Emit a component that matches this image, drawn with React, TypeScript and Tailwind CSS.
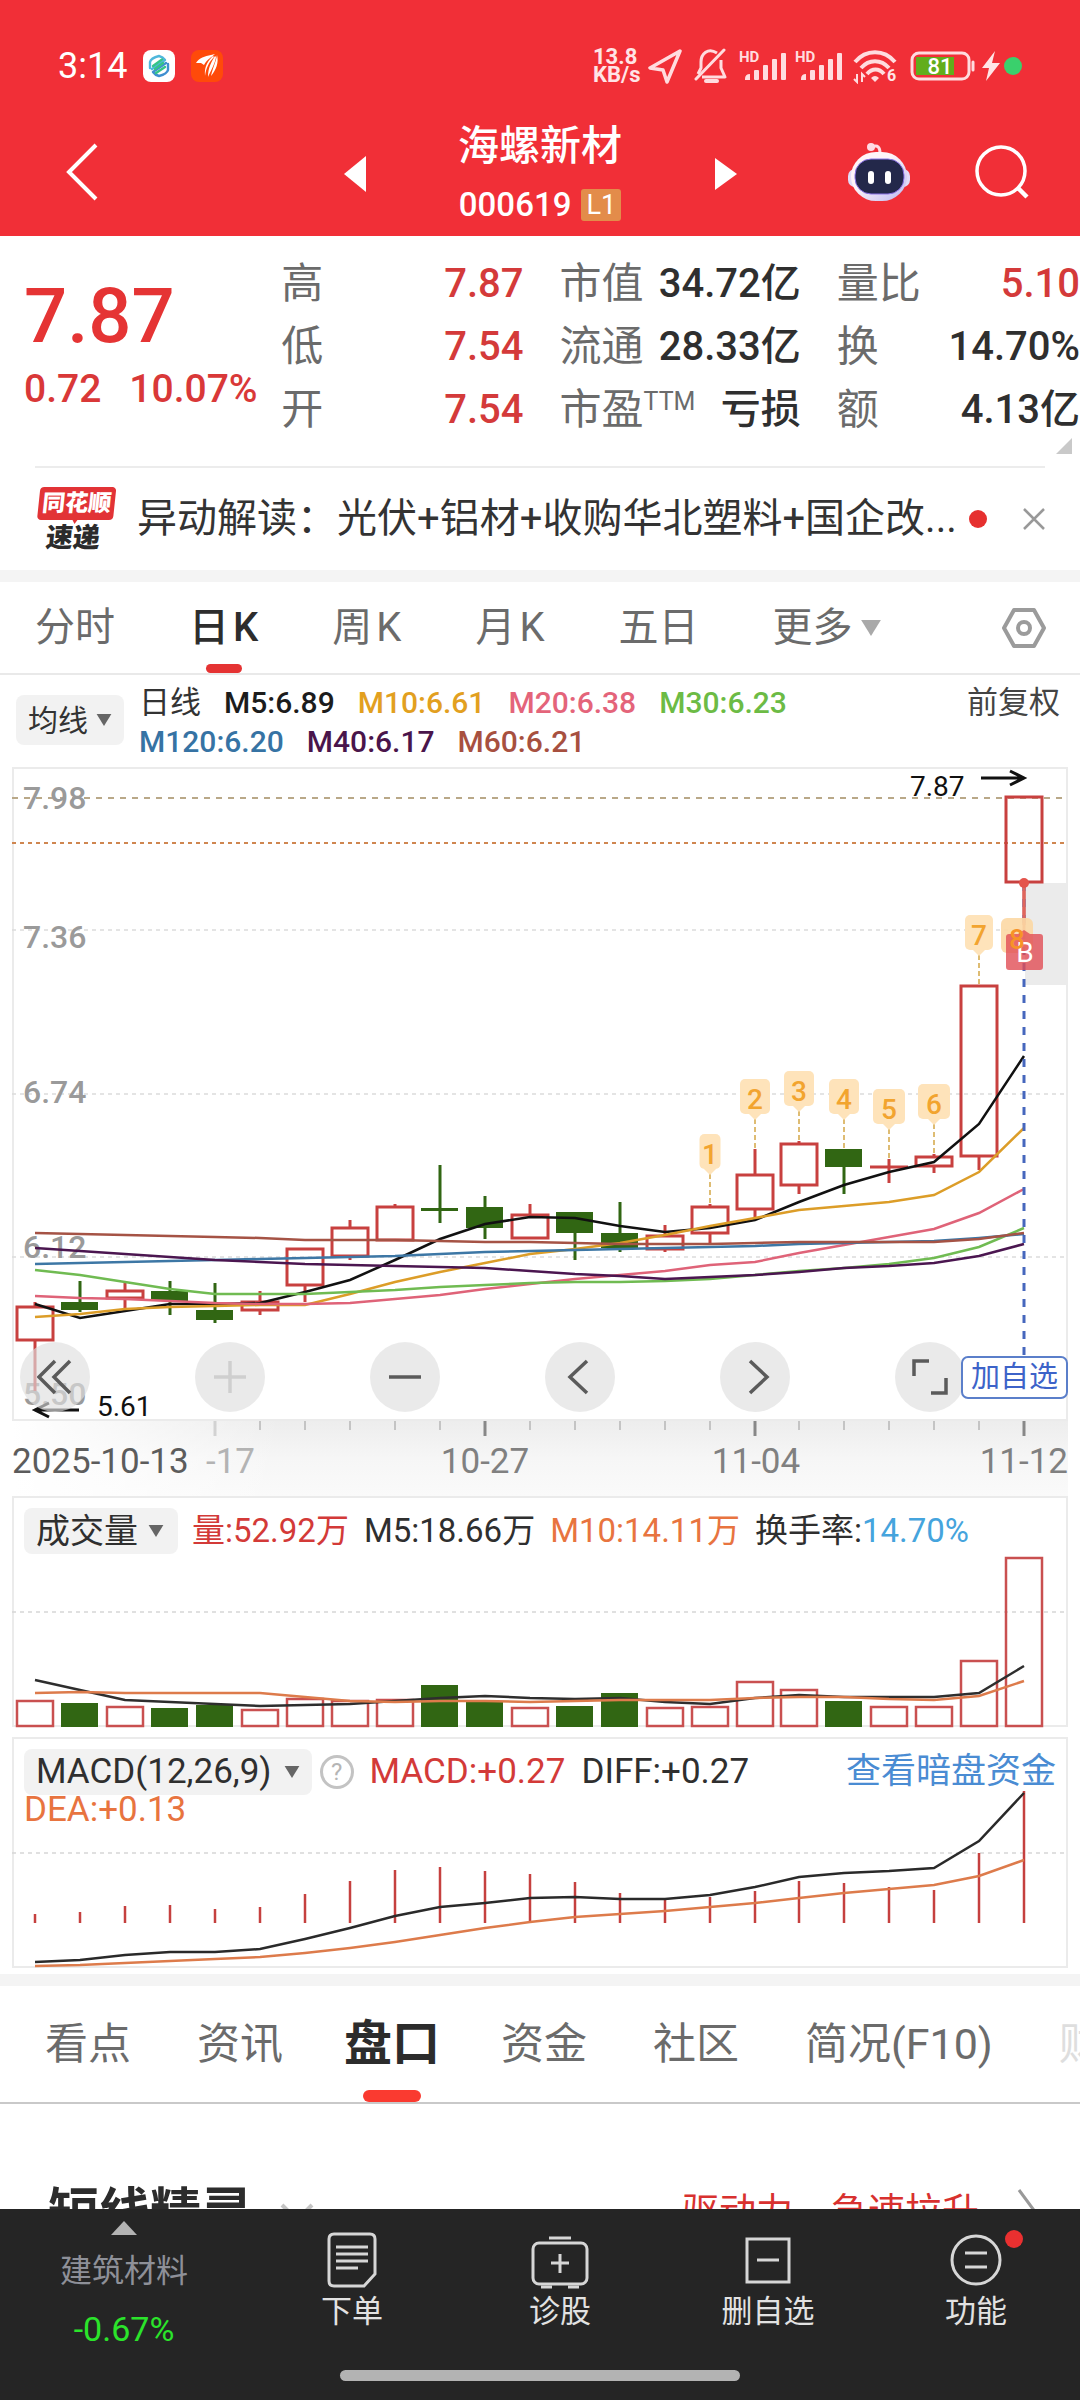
import React from "react";

/* ---------- chart data ---------- */

type Candle = { up: boolean; top: number; bottom: number; high: number; low: number };

const c = (up: boolean, top: number, bottom: number, high: number, low: number): Candle => ({ up, top, bottom, high, low });

const candles: Candle[] = [
  c(true, 1307, 1340, 1302, 1391),
  c(false, 1302, 1310, 1281, 1312),
  c(true, 1291, 1298, 1283, 1309),
  c(false, 1291, 1301, 1281, 1315),
  c(false, 1310, 1320, 1283, 1323),
  c(true, 1302, 1310, 1291, 1315),
  c(true, 1249, 1285, 1249, 1302),
  c(true, 1228, 1256, 1220, 1260),
  c(true, 1207, 1240, 1204, 1240),
  c(false, 1208, 1211, 1165, 1223),
  c(false, 1207, 1228, 1196, 1239),
  c(true, 1215, 1238, 1204, 1238),
  c(false, 1212, 1233, 1212, 1260),
  c(false, 1233, 1248, 1202, 1252),
  c(true, 1236, 1249, 1225, 1252),
  c(true, 1207, 1233, 1204, 1243),
  c(true, 1175, 1209, 1149, 1217),
  c(true, 1144, 1185, 1141, 1194),
  c(false, 1149, 1167, 1149, 1194),
  c(true, 1167, 1167, 1159, 1183),
  c(true, 1157, 1166, 1154, 1173),
  c(true, 986, 1156, 986, 1170),
  c(true, 797, 882, 797, 925),
];

const volumeTops = [
  1701, 1703, 1707, 1708, 1705, 1710, 1699, 1701, 1700, 1685, 1702, 1708, 1706, 1693, 1708, 1707, 1682, 1690, 1701, 1707,
  1707, 1661, 1558,
];

const macdTops = [
  1914, 1912, 1906, 1905, 1909, 1907, 1894, 1881, 1870, 1867, 1871, 1874, 1882, 1893, 1899, 1897, 1891, 1881, 1883, 1887,
  1890, 1853, 1791,
];

const averages: { color: string; values: number[] }[] = [
  { color: "#111111", values: [1304, 1318, 1311, 1304, 1304, 1303, 1292, 1280, 1260, 1239, 1224, 1217, 1218, 1226, 1232, 1228, 1220, 1202, 1185, 1172, 1162, 1124, 1056] },
  { color: "#dc9d28", values: [1317, 1314, 1309, 1307, 1306, 1305, 1305, 1294, 1282, 1272, 1263, 1254, 1249, 1243, 1235, 1226, 1218, 1210, 1206, 1202, 1195, 1172, 1128] },
  { color: "#df6378", values: [1296, 1298, 1299, 1301, 1303, 1304, 1304, 1303, 1299, 1295, 1289, 1284, 1279, 1275, 1271, 1265, 1262, 1253, 1245, 1237, 1229, 1213, 1189] },
  { color: "#70bb52", values: [1270, 1275, 1282, 1289, 1294, 1294, 1294, 1292, 1290, 1287, 1285, 1283, 1282, 1282, 1281, 1279, 1275, 1271, 1268, 1264, 1258, 1247, 1228] },
  { color: "#3d77a5", values: [1264, 1263, 1262, 1261, 1260, 1259, 1258, 1257, 1256, 1254, 1252, 1251, 1250, 1249, 1248, 1247, 1246, 1244, 1243, 1242, 1241, 1238, 1234] },
  { color: "#4b1650", values: [1248, 1251, 1254, 1257, 1260, 1262, 1264, 1265, 1266, 1267, 1268, 1271, 1274, 1276, 1279, 1277, 1275, 1272, 1268, 1266, 1263, 1256, 1244] },
  { color: "#a55345", values: [1233, 1234, 1235, 1236, 1237, 1238, 1240, 1240, 1240, 1241, 1242, 1242, 1243, 1244, 1244, 1244, 1243, 1242, 1242, 1242, 1242, 1239, 1233] },
];

const volumeM5 = [1680, 1690, 1700, 1702, 1704, 1706, 1705, 1704, 1701, 1698, 1696, 1698, 1699, 1698, 1702, 1704, 1698, 1695, 1697, 1697, 1697, 1693, 1666];
const volumeM10 = [1693, 1692, 1693, 1693, 1693, 1693, 1697, 1701, 1702, 1701, 1701, 1702, 1701, 1700, 1700, 1700, 1698, 1697, 1697, 1699, 1700, 1696, 1681];
const diff = [1962, 1960, 1955, 1952, 1952, 1949, 1939, 1928, 1916, 1907, 1903, 1898, 1897, 1899, 1899, 1895, 1887, 1877, 1873, 1871, 1868, 1841, 1793];
const dea = [1966, 1965, 1963, 1961, 1959, 1957, 1953, 1948, 1942, 1935, 1928, 1922, 1917, 1914, 1911, 1907, 1903, 1898, 1893, 1889, 1885, 1876, 1860];

const markers = [
  { n: "1", i: 15, y: 1134, w: 21 },
  { n: "2", i: 16, y: 1079, w: 30 },
  { n: "3", i: 17, y: 1071, w: 30 },
  { n: "4", i: 18, y: 1079, w: 30 },
  { n: "5", i: 19, y: 1089, w: 32 },
  { n: "6", i: 20, y: 1084, w: 32 },
  { n: "7", i: 21, y: 915, w: 28 },
];

const RED = "#c8403f";
const GREEN = "#316613";
const xAt = (i: number) => 35 + i * 45 - (i > 16 ? 1 : 0);
const line = (values: number[]) => values.map((y, i) => `${xAt(i)},${y}`).join(" ");

/* ---------- small drawings ---------- */

const Caret = ({ className }: { className: string }) => (
  <svg viewBox="0 0 16 13" className={className} aria-hidden="true">
    <path d="M0 0H16L8 13Z" fill="currentColor" />
  </svg>
);

const Signal = () => (
  <svg viewBox="0 0 48 34" className="h-[34px] w-12" aria-hidden="true">
    <text x="0" y="13" fontSize="15" fontWeight="700" fill="#ffdcdf">HD</text>
    <g fill="#ffdcdf">
      <path d="M6 30Q6 25 11 25V31H6Z" />
      <rect x="15" y="21" width="5" height="10" rx="1" />
      <rect x="24" y="16" width="5" height="15" rx="1" />
      <rect x="33" y="10" width="5" height="21" rx="1" />
      <rect x="42" y="4" width="5" height="27" rx="1" />
    </g>
  </svg>
);

function StatusBar() {
  return (
    <div className="flex items-center justify-between pt-10 pr-[58px] pl-[58px] text-white">
      <div className="flex h-[52px] items-center">
        <span className="text-[36px] leading-[52px]">3:14</span>
        <svg viewBox="0 0 32 32" className="ml-4 size-8" aria-hidden="true">
          <rect width="32" height="32" rx="8" fill="#fff" />
          <g fill="none" strokeWidth="2.4" strokeLinecap="round" strokeLinejoin="round">
            <path d="M7 18V12Q8 8 16 6Q20 7 22 10L9 19" stroke="#4fb7dc" />
            <path d="M25 14V20Q24 24 16 26Q12 25 10 22L23 13" stroke="#3f8fd0" />
            <path d="M10 16L19 9.500M12 19L20 13M13 23L22 17" stroke="#35c487" />
          </g>
        </svg>
        <svg viewBox="0 0 32 32" className="ml-4 size-8" aria-hidden="true">
          <rect width="32" height="32" rx="8" fill="#ff4a0a" />
          <g fill="#fff">
            <path d="M5 13C8 8 14 6 20 5L24 4C21 7 16 9 13 15L10 13Z" />
            <path d="M22 6C18 10 13 15 14 26C15 18 18 12 23 7Z" />
            <path d="M24 6C21 11 17 17 17 27C20 20 24 14 25 7Z" />
            <path d="M26 5C25 12 22 17 20 26C25 20 28 13 26 5Z" />
          </g>
        </svg>
      </div>
      <div className="flex h-[52px] items-center">
        <div className="w-[55px] text-[22px] leading-[18px] font-bold text-[#ffe4e6]">
          <div>13.8</div>
          <div>KB/s</div>
        </div>
        <svg viewBox="0 0 34 36" className="h-9 w-[34px]" fill="none" stroke="#ffdcdf" strokeWidth="3.500" strokeLinejoin="round" aria-hidden="true">
          <path d="M32 3L2 20L15 22L19 34Z" />
        </svg>
        <svg viewBox="0 0 34 36" className="ml-3 h-9 w-[34px]" fill="none" stroke="#ffdcdf" strokeWidth="3" strokeLinejoin="round" aria-hidden="true">
          <path d="M23 5C14 -1 7 6 7 14V20L4 26" />
          <path d="M27 12V20L31 29H8" />
          <path d="M30 2L2 31" strokeLinecap="round" />
          <path d="M12 33H23" strokeWidth="4" strokeLinecap="round" />
        </svg>
        <div className="ml-[11px] flex gap-2">
          <Signal />
          <Signal />
        </div>
        <svg viewBox="0 0 44 36" className="ml-[10px] h-9 w-11" aria-hidden="true">
          <g fill="none" stroke="#ffdcdf" strokeWidth="4">
            <path d="M2 14C13 1 31 1 42 14" />
            <path d="M8 20C16 11 28 11 36 20" />
            <path d="M14 26C19 20 26 20 31 26" />
          </g>
          <path d="M18 30Q22 26 26 30L22 34Z" fill="#ffdcdf" />
          <path d="M4 26V34L1 31M9 34V26L12 29" stroke="#ffdcdf" strokeWidth="2" fill="none" />
          <text x="34" y="33" fontSize="16" fontWeight="700" fill="#ffe4e6">6</text>
        </svg>
        <svg viewBox="0 0 66 30" className="ml-[13px] h-[30px] w-[66px]" aria-hidden="true">
          <rect x="2" y="2" width="57" height="26" rx="7" fill="none" stroke="#ffdcdf" strokeWidth="3" />
          <rect x="6" y="6" width="38" height="18" fill="#62ad1c" />
          <path d="M63 11V19" stroke="#ffdcdf" strokeWidth="3" strokeLinecap="round" />
          <text x="30" y="23" fontSize="22" fontWeight="500" textAnchor="middle" fill="#fff">81</text>
        </svg>
        <svg viewBox="0 0 18 30" className="ml-[6px] h-[30px] w-[18px]" aria-hidden="true">
          <path d="M13 0L0 17H7L4 30L18 12H10Z" fill="#ffe4e6" />
        </svg>
        <span className="ml-1 size-[18px] rounded-full bg-[#3ad06c]" />
      </div>
    </div>
  );
}

function Header() {
  return (
    <header className="bg-[#f12f37] text-white">
      <StatusBar />
      <div className="grid grid-cols-[1fr_auto_1fr] items-center pb-2">
        <div className="pt-6 pl-16">
          <button type="button" aria-label="返回" className="flex h-16 w-9 items-center">
            <svg viewBox="0 0 36 60" className="h-[60px] w-9" fill="none" stroke="currentColor" strokeWidth="4" aria-hidden="true">
              <path d="M32 3L5 30L32 57" />
            </svg>
          </button>
        </div>
        <div className="flex items-center">
          <button type="button" aria-label="上一只" className="pt-7">
            <svg viewBox="0 0 22 36" className="h-9 w-[22px]" aria-hidden="true"><path d="M22 0V36L0 18Z" fill="#fff" /></svg>
          </button>
          <div className="flex w-[349px] flex-col items-center pt-[22px]">
            <h1 className="text-[41px] leading-[64px] font-medium">海螺新材</h1>
            <div className="flex items-center gap-[10px] pt-1">
              <span className="text-[33px] leading-[46px] font-medium">000619</span>
              <span className="rounded-[3px] bg-[#e38c4a] px-[5px] text-[27px] leading-8">L1</span>
            </div>
          </div>
          <button type="button" aria-label="下一只" className="pt-7">
            <svg viewBox="0 0 22 32" className="h-8 w-[22px]" aria-hidden="true"><path d="M0 0V32L22 16Z" fill="#fff" /></svg>
          </button>
        </div>
        <div className="flex items-center justify-end gap-16 pt-6 pr-[51px]">
          <button type="button" aria-label="智能助手">
            <svg viewBox="0 0 64 60" className="h-[60px] w-16" aria-hidden="true">
              <defs>
                <linearGradient id="shell" x1="0" y1="0" x2="1" y2="1">
                  <stop offset="0.4" stopColor="#fff4f8" />
                  <stop offset="1" stopColor="#b9b8f2" />
                </linearGradient>
              </defs>
              <path d="M25 5C31 2 33 6 33 11" fill="none" stroke="#ffdbe4" strokeWidth="3" />
              <circle cx="24" cy="5" r="4" fill="#ffdbe4" />
              <rect x="1" y="27" width="62" height="18" rx="7" fill="#e2dcf8" />
              <rect x="4" y="10" width="56" height="49" rx="25" fill="url(#shell)" />
              <rect x="8" y="17" width="49" height="35" rx="16" fill="#23284a" stroke="#8c74e8" strokeWidth="1" />
              <rect x="21" y="29" width="6" height="13" rx="3" fill="#fff" />
              <rect x="38" y="29" width="6" height="13" rx="3" fill="#fff" />
            </svg>
          </button>
          <button type="button" aria-label="搜索">
            <svg viewBox="0 0 54 54" className="size-[54px]" fill="none" stroke="#fff" strokeWidth="3.500" aria-hidden="true">
              <circle cx="26" cy="26" r="24" />
              <path d="M43 43L52 52" strokeWidth="4.500" />
            </svg>
          </button>
        </div>
      </div>
    </header>
  );
}

function Stat({ label, sup, value, red }: { label: string; sup?: string; value: string; red?: boolean }) {
  return (
    <div className="flex items-center justify-between whitespace-nowrap">
      <dt className="flex text-[#6b6b6b]">
        {label}
        {sup && <span className="text-[25px] leading-[48px]">{sup}</span>}
      </dt>
      <dd className={red ? "text-[40px] font-medium text-[#d43a3a]" : "text-[40px] font-medium text-[#2f2f2f]"}>{value}</dd>
    </div>
  );
}

function Quote() {
  return (
    <section className="relative">
      <div className="grid grid-cols-[minmax(0,245fr)_minmax(0,242fr)_minmax(0,241fr)_minmax(0,243fr)] gap-x-9 pt-4 pb-[25px] text-[42px] leading-[63px]">
        <div className="pt-[22px] pl-6 whitespace-nowrap text-[#d93838]">
          <div className="text-[76px] leading-[84px] font-medium text-[#e53434]">7.87</div>
          <div className="flex gap-7 text-[39px] leading-[62px] font-medium">
            <span>0.72</span>
            <span>10.07%</span>
          </div>
        </div>
        <dl>
          <Stat label="高" value="7.87" red />
          <Stat label="低" value="7.54" red />
          <Stat label="开" value="7.54" red />
        </dl>
        <dl>
          <Stat label="市值" value="34.72亿" />
          <Stat label="流通" value="28.33亿" />
          <Stat label="市盈" sup="TTM" value="亏损" />
        </dl>
        <dl>
          <Stat label="量比" value="5.10" red />
          <Stat label="换" value="14.70%" />
          <Stat label="额" value="4.13亿" />
        </dl>
      </div>
      <svg viewBox="0 0 16 16" className="absolute right-2 bottom-3 size-4" aria-hidden="true"><path d="M16 0V16H0Z" fill="#c9c9c9" /></svg>
    </section>
  );
}

function News() {
  return (
    <section className="mx-[35px] flex h-[104px] items-center border-t-2 border-[#ececec]">
      <div className="flex w-20 -skew-x-6 flex-col items-center">
        <span className="w-[76px] rounded-[4px] bg-[#e23336] text-center text-[23px] leading-[33px] font-black text-white">同花顺</span>
        <Caret className="h-1 w-2 text-[#e23336]" />
        <span className="text-[27px] leading-7 font-black text-[#2b2b2b]">速递</span>
      </div>
      <a href="#news" className="ml-[22px] min-w-0 flex-1 overflow-hidden text-[40px] leading-[60px] whitespace-nowrap text-[#333]">
        异动解读：光伏+铝材+收购华北塑料+国企改...
      </a>
      <span className="size-[18px] shrink-0 rounded-full bg-[#e6302f]" />
      <button type="button" aria-label="关闭" className="ml-9">
        <svg viewBox="0 0 22 22" className="size-[22px]" stroke="#999" strokeWidth="2.500" aria-hidden="true"><path d="M1 1L21 21M21 1L1 21" /></svg>
      </button>
    </section>
  );
}

function PeriodTabs() {
  const tab = "relative flex h-[91px] items-center text-[40px] text-[#6b6b6b]";
  return (
    <nav className="flex items-center justify-between border-b-2 border-[#e9e9e9] pr-[33px] pl-[35px]">
      <div className="flex gap-[74px]">
        <button type="button" className={tab}>分时</button>
        <button type="button" className="relative flex h-[91px] items-center gap-1 text-[40px] font-medium text-[#2d2d2d]">
          <span>日</span><span>K</span>
          <span className="absolute bottom-0 left-1/2 h-[9px] w-9 -translate-x-1/2 rounded-full bg-[#e53333]" />
        </button>
        <button type="button" className={tab}><span className="mr-1">周</span>K</button>
        <button type="button" className={tab}><span className="mr-1">月</span>K</button>
        <button type="button" className={tab}>五日</button>
        <button type="button" className={tab}>更多<Caret className="ml-2 h-4 w-5 text-[#a9a9a9]" /></button>
      </div>
      <button type="button" aria-label="设置">
        <svg viewBox="0 0 46 42" className="h-[42px] w-[46px]" fill="none" stroke="#9b9b9b" strokeWidth="4" strokeLinejoin="round" aria-hidden="true">
          <path d="M13 3H33L43 21L33 39H13L3 21Z" />
          <circle cx="23" cy="21" r="6" />
        </svg>
      </button>
    </nav>
  );
}

function Averages() {
  return (
    <section className="flex items-start px-4 pt-[8px] pb-1">
      <button type="button" className="mt-3 flex h-[50px] items-center gap-2 rounded-lg bg-[#f2f2f2] pr-3 pl-3 text-[30px] text-[#333]">
        均线<Caret className="h-3 w-4 text-[#666]" />
      </button>
      <div className="ml-[15px] flex max-w-[720px] flex-wrap gap-x-[23px] text-[30px] leading-[39px] font-medium">
        <span className="text-[31px] font-normal text-[#333]">日线</span>
        <span className="text-[#1c1c1c]">M5:6.89</span>
        <span className="text-[#e2a01f]">M10:6.61</span>
        <span className="text-[#e4647a]">M20:6.38</span>
        <span className="text-[#6cbb45]">M30:6.23</span>
        <span className="text-[#3673a4]">M120:6.20</span>
        <span className="text-[#4a154b]">M40:6.17</span>
        <span className="text-[#a7503f]">M60:6.21</span>
      </div>
      <button type="button" className="ml-auto pr-1 text-[31px] leading-[39px] text-[#444]">前复权</button>
    </section>
  );
}

function PriceChart() {
  const grid = { stroke: "#dcdcdc", strokeWidth: 1.5, strokeDasharray: "4 4" };
  return (
    <svg viewBox="0 765 1080 731" className="block w-full" aria-label="日K线图">
      <defs>
        <linearGradient id="axis" x1="0" y1="0" x2="0" y2="1">
          <stop offset="0" stopColor="#ededed" />
          <stop offset="0.5" stopColor="#f6f6f6" />
          <stop offset="1" stopColor="#fafafa" />
        </linearGradient>
        <linearGradient id="fade" x1="0" y1="0" x2="1" y2="0">
          <stop offset="0" stopColor="#fff" />
          <stop offset="1" stopColor="#fff" stopOpacity="0" />
        </linearGradient>
      </defs>
      <rect x="13" y="768" width="1054" height="652" fill="none" stroke="#ebebeb" strokeWidth="2" />
      <rect x="13" y="1421" width="1055" height="75" fill="url(#axis)" />
      <rect x="12" y="1421" width="270" height="75" fill="url(#fade)" />

      <path d="M12 930H1067M12 1094H1067M12 1257H1067" {...grid} />
      <path d="M12 798H1067" stroke="#b9a888" strokeWidth="2" strokeDasharray="6 6" />
      <path d="M12 843H1067" stroke="#cf8650" strokeWidth="2" strokeDasharray="4 4" />
      <rect x="1025" y="883" width="43" height="102" fill="#ebebeb" />

      <g fontSize="32" fontWeight="500" fill="#9a9a9a">
        <text x="23" y="809">7.98</text>
        <text x="23" y="948">7.36</text>
        <text x="23" y="1103">6.74</text>
        <text x="23" y="1258">6.12</text>
        <text x="23" y="1405">5.50</text>
      </g>

      {markers.map((m) => {
        const x = xAt(m.i);
        return (
          <g key={m.n}>
            <path d={`M${x} ${m.y + 40}V${candles[m.i].high}`} stroke="#d3a745" strokeWidth="1.5" strokeDasharray="5 3" />
            <rect x={x - m.w / 2} y={m.y} width={m.w} height="35" rx="5" fill="#fee3ba" />
            <path d={`M${x - 6} ${m.y + 35}H${x + 6}L${x} ${m.y + 41}Z`} fill="#fee3ba" />
            <text x={x} y={m.y + 30} fontSize="28" fontWeight="500" textAnchor="middle" fill="#f2a42f">{m.n}</text>
          </g>
        );
      })}

      {candles.map((k, i) => {
        const x = xAt(i);
        const color = k.up ? RED : GREEN;
        return (
          <g key={i} stroke={color} strokeWidth="3">
            <path d={`M${x} ${k.high}V${k.top}M${x} ${k.bottom}V${k.low}`} />
            {k.up && k.top === k.bottom ? (
              <path d={`M${x - 19} ${k.top}H${x + 19}`} />
            ) : k.up ? (
              <rect x={x - 18} y={k.top} width="36" height={k.bottom - k.top} fill="none" />
            ) : (
              <rect x={x - 19} y={k.top} width="37" height={k.bottom - k.top} fill={GREEN} stroke="none" />
            )}
          </g>
        );
      })}

      {averages.map((a) => (
        <polyline key={a.color} points={line(a.values)} fill="none" stroke={a.color} strokeWidth="2.500" />
      ))}

      <path d="M1024 883V1357" stroke="#4667bd" strokeWidth="3" strokeDasharray="8 8" />
      <path d="M1024 883V935" stroke="#e0665c" strokeWidth="3" />
      <circle cx="1024" cy="883" r="5" fill="#e4544c" />
      <rect x="1001" y="918" width="32" height="35" rx="6" fill="#fcd8a4" opacity="0.9" />
      <path d="M1018 934L1024 930L1030 934H1040Q1043 934 1043 937V967Q1043 970 1040 970H1009Q1006 970 1006 967V937Q1006 934 1009 934Z" fill="#e14d55" opacity="0.8" />
      <text x="1025" y="962" fontSize="28" textAnchor="middle" fill="#fff">B</text>
      <text x="1017" y="949" fontSize="28" fontWeight="500" textAnchor="middle" fill="#f79327">8</text>

      <g fontSize="28" fill="#111">
        <text x="910" y="796">7.87</text>
        <text x="97" y="1416">5.61</text>
      </g>
      <g fill="none" stroke="#111" strokeWidth="3">
        <path d="M981 778H1024M1010 771L1024 778L1010 785" />
        <path d="M79 1410H35M49 1403L35 1410L49 1417" />
      </g>

      {candles.map((_, i) =>
        i < 4 ? null : i % 6 === 4 ? (
          <path key={i} d={`M${xAt(i)} 1421V1436`} stroke={i === 4 ? "#d2d2d2" : "#888"} strokeWidth="3" />
        ) : (
          <path key={i} d={`M${xAt(i)} 1421V1430`} stroke="#c4c4c4" strokeWidth="2" />
        ),
      )}
      <g fontSize="35" fill="#808080">
        <text x="12" y="1473" fill="#5c5c5c">2025-10-13</text>
        <text x="206" y="1473" fill="#b3b3b3">-17</text>
        <text x="485" y="1473" textAnchor="middle">10-27</text>
        <text x="756" y="1473" textAnchor="middle">11-04</text>
        <text x="1068" y="1473" textAnchor="end">11-12</text>
      </g>
    </svg>
  );
}

function ChartControls() {
  const round = "flex size-[70px] items-center justify-center rounded-full bg-[#dedede]/65 text-[#5b5b5b]";
  const icon = { viewBox: "0 0 36 36", className: "size-9", fill: "none", stroke: "currentColor", strokeWidth: 3.5, "aria-hidden": true } as const;
  return (
    <div className="absolute inset-x-0 bottom-[84px] flex items-center justify-between pr-3 pl-5">
      <button type="button" aria-label="最早" className={round}><svg {...icon}><path d="M18 2L2 18L18 34M33 2L17 18L33 34" /></svg></button>
      <button type="button" aria-label="放大" className="flex size-[70px] items-center justify-center rounded-full bg-[#dedede]/65 text-[#cfcfcf]"><svg {...icon}><path d="M2 18H34M18 2V34" /></svg></button>
      <button type="button" aria-label="缩小" className={round}><svg {...icon}><path d="M2 18H34" /></svg></button>
      <button type="button" aria-label="向左" className={round}><svg {...icon}><path d="M25 2L8 18L25 34" /></svg></button>
      <button type="button" aria-label="向右" className={round}><svg {...icon}><path d="M13 2L30 18L13 34" /></svg></button>
      <div className="flex items-center">
        <button type="button" aria-label="全屏" className={round}><svg {...icon}><path d="M2 17V2H17M19 34H34V19" /></svg></button>
        <button type="button" className="-ml-1 h-[43px] rounded-[7px] border-2 border-[#5b7fca] bg-white px-2 text-[29px] leading-[39px] text-[#3d63c9]">加自选</button>
      </div>
    </div>
  );
}

function VolumeChart() {
  return (
    <section className="relative">
      <svg viewBox="0 1496 1080 241" className="block w-full" aria-label="成交量图">
        <rect x="13" y="1497" width="1054" height="229" fill="none" stroke="#ebebeb" strokeWidth="2" />
        <path d="M12 1612H1067" stroke="#d6d6d6" strokeWidth="1.500" strokeDasharray="4 4" />
        {volumeTops.map((y, i) => {
          const x = xAt(i);
          return candles[i].up ? (
            <rect key={i} x={x - 18} y={y} width="36" height={1726 - y} fill="none" stroke="#c95050" strokeWidth="2.500" />
          ) : (
            <rect key={i} x={x - 19} y={y} width="37" height={1727 - y} fill={GREEN} />
          );
        })}
        <polyline points={line(volumeM5)} fill="none" stroke="#2e2e2e" strokeWidth="2.500" />
        <polyline points={line(volumeM10)} fill="none" stroke="#dd7b4b" strokeWidth="2.500" />
      </svg>
      <div className="absolute inset-x-0 top-3 flex items-center pl-6 text-[33px] leading-[46px] whitespace-nowrap text-[#2f2f2f]">
        <button type="button" className="flex items-center gap-[10px] rounded-lg bg-[#f2f2f2] pr-[14px] pl-3 text-[34px]">
          成交量<Caret className="h-3 w-4 text-[#666]" />
        </button>
        <div className="ml-[14px] flex gap-[15px]">
          <span className="text-[#d33a38]">量:52.92万</span>
          <span>M5:18.66万</span>
          <span className="text-[#e8743f]">M10:14.11万</span>
          <span>换手率:<span className="text-[#45a4dd]">14.70%</span></span>
        </div>
      </div>
    </section>
  );
}

function MacdChart() {
  return (
    <section className="relative">
      <svg viewBox="0 1737 1080 237" className="block w-full" aria-label="MACD图">
        <rect x="13" y="1738" width="1054" height="229" fill="none" stroke="#ebebeb" strokeWidth="2" />
        <path d="M12 1853H1067" stroke="#d6d6d6" strokeWidth="1.500" strokeDasharray="4 4" />
        {macdTops.map((y, i) => (
          <path key={i} d={`M${xAt(i)} ${y}V1923`} stroke="#c5403f" strokeWidth="2.500" />
        ))}
        <polyline points={line(diff)} fill="none" stroke="#2a2a2a" strokeWidth="2.500" />
        <polyline points={line(dea)} fill="none" stroke="#dd7b4b" strokeWidth="2.500" />
      </svg>
      <div className="absolute inset-x-0 top-3 pr-6 pl-6 text-[35px] whitespace-nowrap">
        <div className="flex items-center leading-[46px]">
          <button type="button" className="flex items-center gap-3 rounded-lg bg-[#f2f2f2] px-3 text-[#2f2f2f]">
            MACD(12,26,9)<Caret className="h-3 w-4 text-[#666]" />
          </button>
          <button type="button" aria-label="说明" className="ml-2 flex size-[34px] items-center justify-center rounded-full border-3 border-[#c3c3c3] text-[24px] leading-6 text-[#b5b5b5]">?</button>
          <span className="ml-4 text-[#d33a38]">MACD:+0.27</span>
          <span className="ml-4 text-[#2f2f2f]">DIFF:+0.27</span>
          <a href="#dark-pool" className="ml-auto text-[#4a8cd3]">查看暗盘资金</a>
        </div>
        <div className="leading-[30px] text-[#e8743f]">DEA:+0.13</div>
      </div>
    </section>
  );
}

function SectionTabs() {
  const tab = "shrink-0 text-[#6b6b6b]";
  return (
    <nav className="flex h-[118px] items-center gap-[66px] overflow-hidden border-b-2 border-[#c9c9c9] pl-[45px] text-[43px] whitespace-nowrap">
      <button type="button" className={tab}>看点</button>
      <button type="button" className={tab}>资讯</button>
      <button type="button" className="relative -mx-[5px] flex h-full shrink-0 items-center text-[48px] font-bold text-[#2c2c2c]">
        盘口
        <span className="absolute bottom-0 left-1/2 h-3 w-[58px] -translate-x-1/2 rounded-full bg-[#fa3a30]" />
      </button>
      <button type="button" className={tab}>资金</button>
      <button type="button" className={tab}>社区</button>
      <button type="button" className={tab}>简况(F10)</button>
      <button type="button" className="shrink-0 text-[#dedede]">财务</button>
    </nav>
  );
}

function Sprite() {
  return (
    <section className="flex items-center justify-between pt-[73px] pr-[41px] pl-12">
      <h2 className="flex items-center gap-7 text-[51px] leading-[72px] font-bold text-[#2c2c2c]">
        短线精灵
        <svg viewBox="0 0 34 20" className="h-5 w-[34px]" fill="none" stroke="#c4c4c4" strokeWidth="4" aria-hidden="true"><path d="M2 2L17 17L32 2" /></svg>
      </h2>
      <a href="#sprite" className="flex items-center gap-[38px] text-[37px] leading-[72px] text-[#d8312f]">
        <span>驱动力</span>
        <span>急速拉升</span>
        <svg viewBox="0 0 22 50" className="h-[50px] w-[22px]" fill="none" stroke="#999" strokeWidth="3" aria-hidden="true"><path d="M2 2L19 25L2 48" /></svg>
      </a>
    </section>
  );
}

function BottomBar() {
  const item = "relative flex flex-col items-center text-[31px] leading-9 text-[#e2e2e2]";
  const cell = "flex justify-center pt-[9px]";
  const icon = { viewBox: "0 0 60 60", className: "size-[60px]", fill: "none", stroke: "#d6d6d6", strokeWidth: 3, "aria-hidden": true } as const;
  return (
    <nav className="fixed inset-x-0 bottom-0 z-10 bg-[#252525] pt-3 pb-[19px]">
      <div className="grid grid-cols-[248fr_208fr_208fr_208fr_208fr] items-start">
        <button type="button" className="flex flex-col items-center text-[#8e9098]">
          <svg viewBox="0 0 26 14" className="h-[14px] w-[26px]" aria-hidden="true"><path d="M13 0L26 14H0Z" fill="#b3b3b3" /></svg>
          <span className="pt-[13px] text-[32px] leading-[46px]">建筑材料</span>
          <span className="pt-3 text-[34px] leading-[46px] text-[#2be42b]">-0.67%</span>
        </button>
        <div className={cell}>
          <button type="button" className={item}>
            <svg {...icon}>
              <path d="M12 4H48Q53 4 53 9V44L42 56H12Q7 56 7 51V9Q7 4 12 4Z" />
              <path d="M14 17H46M14 24H46M14 31H46M14 38H36" />
            </svg>
            <span className="pt-1">下单</span>
          </button>
        </div>
        <div className={cell}>
          <button type="button" className={item}>
            <svg {...icon}>
              <rect x="3" y="13" width="54" height="41" rx="6" />
              <path d="M19 8H41M30 24V43M21 33H39" />
              <path d="M11 57H22M38 57H49" />
            </svg>
            <span className="pt-1">诊股</span>
          </button>
        </div>
        <div className={cell}>
          <button type="button" className={item}>
            <svg {...icon}>
              <rect x="9" y="9" width="42" height="43" />
              <path d="M19 30H41" />
            </svg>
            <span className="pt-1">删自选</span>
          </button>
        </div>
        <div className={cell}>
          <button type="button" className={item}>
            <svg {...icon}>
              <circle cx="30" cy="30" r="24" />
              <path d="M19 23H41M19 37H41" />
            </svg>
            <span className="pt-1">功能</span>
            <span className="absolute top-0 -right-4 size-[18px] rounded-full bg-[#ea3030]" />
          </button>
        </div>
      </div>
      <div className="mx-auto mt-[18px] h-[11px] w-[37%] rounded-full bg-[#b3b3b3]" />
    </nav>
  );
}

export default function App() {
  return (
    <div className="min-h-screen overflow-x-hidden bg-white font-['Roboto','Noto_Sans_CJK_SC',sans-serif]">
      <Header />
      <main>
        <Quote />
        <News />
        <div className="h-3 bg-[#f4f4f4]" />
        <PeriodTabs />
        <Averages />
        <div className="relative">
          <PriceChart />
          <ChartControls />
        </div>
        <VolumeChart />
        <MacdChart />
        <div className="h-3 bg-[#f4f4f4]" />
        <SectionTabs />
        <Sprite />
      </main>
      <BottomBar />
    </div>
  );
}
